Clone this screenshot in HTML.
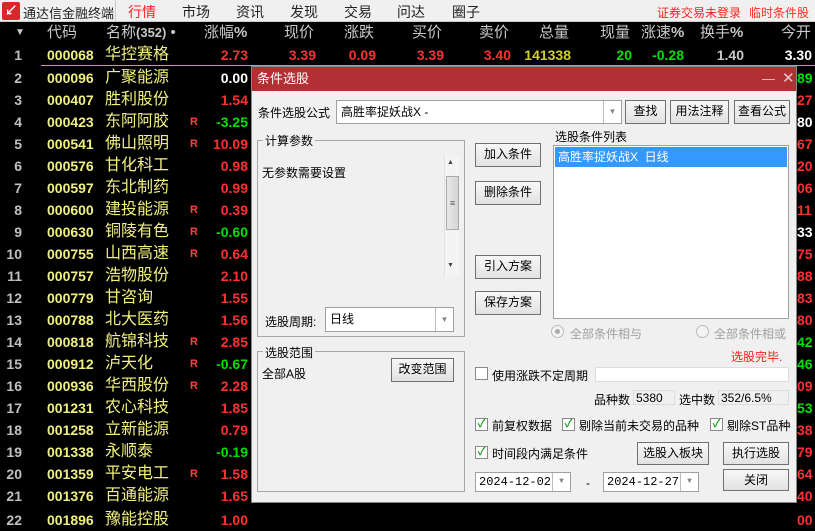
<!DOCTYPE html>
<html><head><meta charset="utf-8">
<style>
*{margin:0;padding:0;box-sizing:border-box}
body{width:815px;height:514px;overflow:hidden;background:#000;position:relative;font-family:"Liberation Sans","Noto Sans CJK SC",sans-serif}
.a{position:absolute;white-space:nowrap}
#top{position:absolute;left:0;top:0;width:815px;height:22px;background:#f0f0f0;border-bottom:1px solid #ccc;font-size:14px;color:#222}
#top .a{top:2px}
.hdr{position:absolute;top:22px;left:0;width:815px;height:22px;font-size:15px;color:#c8c8c8;line-height:22px}
.r{position:absolute;left:0;width:815px;height:22px;line-height:22px;font-size:14px;font-weight:bold}
.r .n{position:absolute;right:793px;color:#c0c0c0}
.r .c{position:absolute;left:47px;color:#f0f080}
.r .m{position:absolute;left:105px;color:#f0f080;font-weight:normal;font-size:16px}
.r .R{position:absolute;left:190px;color:#ff4040;font-size:11px}
.r .p{position:absolute;right:567px}
.r .e{position:absolute;left:797px}
.red{color:#ff3030}.grn{color:#00e000}.wht{color:#fff}
#dlg{position:absolute;left:251px;top:66px;width:546px;height:437px;background:#f0f0f0;border:1px solid #888;font-size:12px;color:#000}
#tb{position:absolute;left:0;top:0;width:100%;height:24px;background:#b22f33;color:#fff;font-size:13px;line-height:24px;padding-left:5px}
.d{position:absolute;white-space:nowrap}
.btn{position:absolute;background:linear-gradient(#f8f8f8,#e2e2e2);border:1px solid #707070;text-align:center;font-size:12px;line-height:21px}
.box{position:absolute;background:#fff;border:1px solid #a0a0a0}
.grp{position:absolute;border:1px solid #a8a8a8}
.gl{position:absolute;background:#f0f0f0;padding:0 2px;font-size:12px}
.cb{position:absolute;width:13px;height:13px;border:1px solid #8a8a8a;background:#fff;font-size:11px;color:#20a020;line-height:11px;text-align:center;font-weight:bold}
.arr{position:absolute;top:0;right:0;width:18px;height:100%;border-left:1px solid #bbb;color:#888;font-size:8px;text-align:center}
</style></head><body>
<div id="top">
<div class="a" style="left:2px;top:2px;width:18px;height:18px;background:#d8262b;border-radius:2px;color:#fff;font-size:13px;text-align:center;line-height:18px;font-weight:bold">↙</div>
<div class="a" style="left:23px;font-size:13px;top:3px">通达信金融终端</div>
<div class="a" style="left:115px;top:0;width:1px;height:22px;background:#ccc"></div>
<div class="a" style="left:128px;color:#ff2020">行情</div>
<div class="a" style="left:182px">市场</div>
<div class="a" style="left:236px">资讯</div>
<div class="a" style="left:290px">发现</div>
<div class="a" style="left:344px">交易</div>
<div class="a" style="left:397px">问达</div>
<div class="a" style="left:452px">圈子</div>
<div class="a" style="left:657px;top:4px;color:#ff2020;font-size:12px;letter-spacing:0">证券交易未登录</div>
<div class="a" style="left:749px;top:4px;color:#ff3020;font-size:12px">临时条件股</div>
</div>
<div class="hdr">
<span class="a" style="left:15px;font-size:10px">▼</span>
<span class="a" style="left:47px">代码</span>
<span class="a" style="left:106px">名称<b style="font-size:13px">(352)</b> •</span>
<span class="a" style="left:204px">涨幅<b>%</b></span>
<span class="a" style="left:284px">现价</span>
<span class="a" style="left:344px">涨跌</span>
<span class="a" style="left:412px">买价</span>
<span class="a" style="left:479px">卖价</span>
<span class="a" style="left:539px">总量</span>
<span class="a" style="left:600px">现量</span>
<span class="a" style="left:641px">涨速<b>%</b></span>
<span class="a" style="left:700px">换手<b>%</b></span>
<span class="a" style="left:781px">今开</span>
</div>
<div class="r" style="top:44px"><span class="n">1</span><span class="c">000068</span><span class="m">华控赛格</span><span class="p red">2.73</span>
<span class="a red" style="right:499px">3.39</span><span class="a red" style="right:439px">0.09</span><span class="a red" style="right:371px">3.39</span><span class="a red" style="right:304px">3.40</span><span class="a" style="right:244px;color:#d0d020">141338</span><span class="a grn" style="right:183px">20</span><span class="a grn" style="right:131px">-0.28</span><span class="a" style="right:71px;color:#c8c8c8">1.40</span><span class="a wht" style="right:3px">3.30</span></div>
<div class="a" style="left:41px;top:65px;width:774px;height:1px;background:#c8b400"></div>
<div class="r" style="top:67px"><span class="n">2</span><span class="c">000096</span><span class="m">广聚能源</span><span class="p wht">0.00</span><span class="e grn">89</span></div>
<div class="r" style="top:89px"><span class="n">3</span><span class="c">000407</span><span class="m">胜利股份</span><span class="p red">1.54</span><span class="e red">27</span></div>
<div class="r" style="top:111px"><span class="n">4</span><span class="c">000423</span><span class="m">东阿阿胶</span><span class="R">R</span><span class="p grn">-3.25</span><span class="e wht">80</span></div>
<div class="r" style="top:133px"><span class="n">5</span><span class="c">000541</span><span class="m">佛山照明</span><span class="R">R</span><span class="p red">10.09</span><span class="e red">67</span></div>
<div class="r" style="top:155px"><span class="n">6</span><span class="c">000576</span><span class="m">甘化科工</span><span class="p red">0.98</span><span class="e red">20</span></div>
<div class="r" style="top:177px"><span class="n">7</span><span class="c">000597</span><span class="m">东北制药</span><span class="p red">0.99</span><span class="e red">06</span></div>
<div class="r" style="top:199px"><span class="n">8</span><span class="c">000600</span><span class="m">建投能源</span><span class="R">R</span><span class="p red">0.39</span><span class="e red">11</span></div>
<div class="r" style="top:221px"><span class="n">9</span><span class="c">000630</span><span class="m">铜陵有色</span><span class="R">R</span><span class="p grn">-0.60</span><span class="e wht">33</span></div>
<div class="r" style="top:243px"><span class="n">10</span><span class="c">000755</span><span class="m">山西高速</span><span class="R">R</span><span class="p red">0.64</span><span class="e red">75</span></div>
<div class="r" style="top:265px"><span class="n">11</span><span class="c">000757</span><span class="m">浩物股份</span><span class="p red">2.10</span><span class="e red">88</span></div>
<div class="r" style="top:287px"><span class="n">12</span><span class="c">000779</span><span class="m">甘咨询</span><span class="p red">1.55</span><span class="e red">83</span></div>
<div class="r" style="top:309px"><span class="n">13</span><span class="c">000788</span><span class="m">北大医药</span><span class="p red">1.56</span><span class="e red">80</span></div>
<div class="r" style="top:331px"><span class="n">14</span><span class="c">000818</span><span class="m">航锦科技</span><span class="R">R</span><span class="p red">2.85</span><span class="e grn">42</span></div>
<div class="r" style="top:353px"><span class="n">15</span><span class="c">000912</span><span class="m">泸天化</span><span class="R">R</span><span class="p grn">-0.67</span><span class="e grn">46</span></div>
<div class="r" style="top:375px"><span class="n">16</span><span class="c">000936</span><span class="m">华西股份</span><span class="R">R</span><span class="p red">2.28</span><span class="e red">09</span></div>
<div class="r" style="top:397px"><span class="n">17</span><span class="c">001231</span><span class="m">农心科技</span><span class="p red">1.85</span><span class="e grn">53</span></div>
<div class="r" style="top:419px"><span class="n">18</span><span class="c">001258</span><span class="m">立新能源</span><span class="p red">0.79</span><span class="e red">38</span></div>
<div class="r" style="top:441px"><span class="n">19</span><span class="c">001338</span><span class="m">永顺泰</span><span class="p grn">-0.19</span><span class="e red">79</span></div>
<div class="r" style="top:463px"><span class="n">20</span><span class="c">001359</span><span class="m">平安电工</span><span class="R">R</span><span class="p red">1.58</span><span class="e red">64</span></div>
<div class="r" style="top:485px"><span class="n">21</span><span class="c">001376</span><span class="m">百通能源</span><span class="p red">1.65</span><span class="e red">40</span></div>
<div class="r" style="top:509px"><span class="n">22</span><span class="c">001896</span><span class="m">豫能控股</span><span class="p red">1.00</span><span class="e red">00</span></div>

<div id="dlg">
<div id="tb">条件选股<span style="position:absolute;left:510px;top:0;color:#e8c8c8">—</span><span style="position:absolute;left:530px;top:0;color:#e8c8c8;font-size:15px">✕</span></div>
<div class="d" style="left:6px;top:37px;font-size:12px">条件选股公式</div>
<div class="box" style="left:84px;top:33px;width:286px;height:24px;font-size:12px;line-height:22px;padding-left:4px">高胜率捉妖战X -<div class="arr" style="line-height:22px">▼</div></div>
<div class="btn" style="left:373px;top:33px;width:41px;height:24px">查找</div>
<div class="btn" style="left:418px;top:33px;width:59px;height:24px">用法注释</div>
<div class="btn" style="left:482px;top:33px;width:56px;height:24px">查看公式</div>

<div class="grp" style="left:5px;top:73px;width:208px;height:197px"></div>
<div class="gl" style="left:11px;top:65px">计算参数</div>
<div class="d" style="left:10px;top:97px;font-size:12px">无参数需要设置</div>
<div class="d" style="left:192px;top:89px;width:15px;height:120px;background:#f4f4f4;border-left:1px solid #e0e0e0"></div>
<div class="d" style="left:195px;top:92px;font-size:7px;color:#444">▲</div>
<div class="d" style="left:194px;top:109px;width:13px;height:54px;background:linear-gradient(90deg,#e8e8e8,#d4d4d4);border:1px solid #aaa;font-size:9px;line-height:52px;text-align:center;color:#555">≡</div>
<div class="d" style="left:195px;top:195px;font-size:7px;color:#444">▼</div>
<div class="d" style="left:13px;top:246px;font-size:12px">选股周期:</div>
<div class="box" style="left:73px;top:240px;width:129px;height:25px;font-size:12px;line-height:23px;padding-left:4px">日线<div class="arr" style="line-height:23px">▼</div></div>

<div class="grp" style="left:5px;top:284px;width:208px;height:141px"></div>
<div class="gl" style="left:11px;top:277px">选股范围</div>
<div class="d" style="left:10px;top:298px;font-size:12px">全部A股</div>
<div class="btn" style="left:139px;top:291px;width:63px;height:24px">改变范围</div>

<div class="btn" style="left:223px;top:76px;width:66px;height:24px">加入条件</div>
<div class="btn" style="left:223px;top:114px;width:66px;height:24px">删除条件</div>
<div class="btn" style="left:223px;top:188px;width:66px;height:24px">引入方案</div>
<div class="btn" style="left:223px;top:224px;width:66px;height:24px">保存方案</div>

<div class="d" style="left:303px;top:61px;font-size:12px">选股条件列表</div>
<div class="box" style="left:301px;top:78px;width:236px;height:174px"><div style="position:absolute;left:1px;top:1px;width:232px;height:20px;background:#3399ff;color:#fff;font-size:12px;line-height:20px;padding-left:3px">高胜率捉妖战X&nbsp; 日线</div></div>

<div class="d" style="left:299px;top:258px;width:13px;height:13px;border-radius:50%;border:1px solid #bbb;background:#f4f4f4"><div style="margin:3px;width:5px;height:5px;border-radius:50%;background:#aaa"></div></div>
<div class="d" style="left:318px;top:258px;color:#a0a0a0">全部条件相与</div>
<div class="d" style="left:444px;top:258px;width:13px;height:13px;border-radius:50%;border:1px solid #bbb;background:#f4f4f4"></div>
<div class="d" style="left:462px;top:258px;color:#a0a0a0">全部条件相或</div>
<div class="d" style="left:479px;top:281px;color:#ff2020;font-size:12px">选股完毕.</div>

<div class="cb" style="left:223px;top:300px"></div>
<div class="d" style="left:240px;top:300px;font-size:12px">使用涨跌不定周期</div>
<div class="box" style="left:343px;top:300px;width:194px;height:15px;border-color:#ddd"></div>
<div class="d" style="left:342px;top:324px;font-size:12px">品种数</div>
<div class="d" style="left:381px;top:323px;width:42px;height:15px;border:1px solid #ddd;font-size:12px;line-height:14px;padding-left:2px">5380</div>
<div class="d" style="left:427px;top:324px;font-size:12px">选中数</div>
<div class="d" style="left:466px;top:323px;width:71px;height:15px;border:1px solid #ddd;font-size:12px;line-height:14px;padding-left:2px">352/6.5%</div>

<div class="cb" style="left:223px;top:351px">✓</div>
<div class="d" style="left:240px;top:350px;font-size:12px">前复权数据</div>
<div class="cb" style="left:310px;top:351px">✓</div>
<div class="d" style="left:327px;top:350px;font-size:12px">剔除当前未交易的品种</div>
<div class="cb" style="left:458px;top:351px">✓</div>
<div class="d" style="left:475px;top:350px;font-size:12px">剔除ST品种</div>

<div class="cb" style="left:223px;top:379px">✓</div>
<div class="d" style="left:240px;top:378px;font-size:12px">时间段内满足条件</div>
<div class="btn" style="left:385px;top:375px;width:72px;height:23px">选股入板块</div>
<div class="btn" style="left:471px;top:375px;width:66px;height:23px">执行选股</div>
<div class="btn" style="left:471px;top:402px;width:66px;height:22px">关闭</div>

<div class="box" style="left:223px;top:405px;width:96px;height:20px;font-size:12px;line-height:18px;padding-left:3px;font-family:'Liberation Mono',monospace">2024-12-02<div class="arr" style="width:18px;line-height:18px">▼</div></div>
<div class="d" style="left:334px;top:409px">-</div>
<div class="box" style="left:351px;top:405px;width:96px;height:20px;font-size:12px;line-height:18px;padding-left:3px;font-family:'Liberation Mono',monospace">2024-12-27<div class="arr" style="width:18px;line-height:18px">▼</div></div>
</div>
</body></html>
